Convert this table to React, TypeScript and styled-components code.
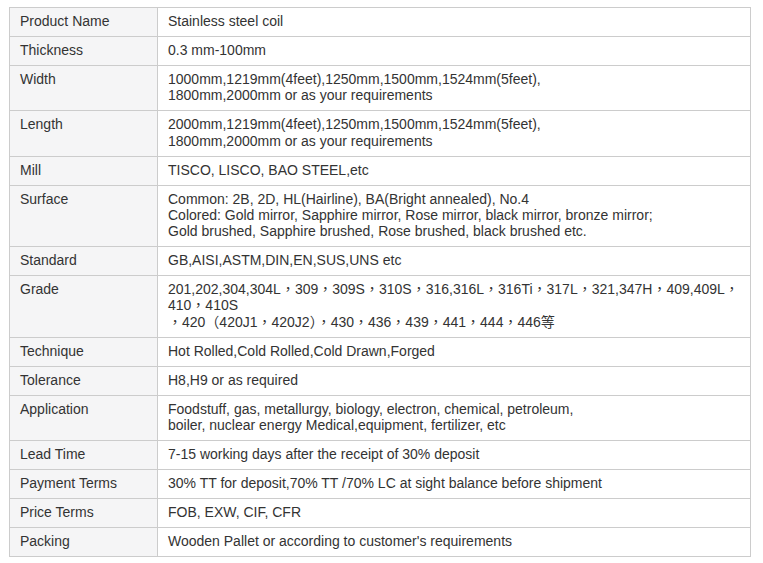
import React from "react";
import styled, { createGlobalStyle } from "styled-components";

const GlobalStyle = createGlobalStyle`
  html, body {
    margin: 0;
    padding: 0;
    background: #ffffff;
  }
  body {
    font-family: "Liberation Sans", Arial, "Noto Sans CJK TC", sans-serif;
    font-size: 14px;
    color: #333333;
  }
`;

const Page = styled.div`
  padding: 7px 0 0 9px;
`;

const SpecTable = styled.table`
  width: 742px;
  table-layout: fixed;
  border-collapse: collapse;
  border: 1px solid #cccccc;
`;

const LabelCol = styled.col`
  width: 148px;
`;

const Row = styled.tr`
  border-bottom: 1px solid #cccccc;
`;

const Cell = styled.td<{ $label?: boolean }>`
  padding: 5px 10px 6.7px 10px;
  vertical-align: top;
  line-height: 16.3px;
  text-align: left;
  border-right: 1px solid #cccccc;
  background: ${(p) => (p.$label ? "#f5f5f6" : "#ffffff")};
  font-family: "Liberation Sans", Arial, "Noto Sans CJK TC", sans-serif;
  color: #333333;
  white-space: nowrap;
`;

const Line = styled.div`
  display: block;
  &:lang(zh-TW) {
    font-family: "Liberation Sans", Arial, "Noto Sans CJK TC", sans-serif;
  }
`;

const rows: { label: string; lines: string[]; lang?: string }[] = [
  { label: "Product Name", lines: ["Stainless steel coil"] },
  { label: "Thickness", lines: ["0.3 mm-100mm"] },
  {
    label: "Width",
    lines: [
      "1000mm,1219mm(4feet),1250mm,1500mm,1524mm(5feet),",
      "1800mm,2000mm or as your requirements",
    ],
  },
  {
    label: "Length",
    lines: [
      "2000mm,1219mm(4feet),1250mm,1500mm,1524mm(5feet),",
      "1800mm,2000mm or as your requirements",
    ],
  },
  { label: "Mill", lines: ["TISCO, LISCO, BAO STEEL,etc"] },
  {
    label: "Surface",
    lines: [
      "Common: 2B, 2D, HL(Hairline), BA(Bright annealed), No.4",
      "Colored: Gold mirror, Sapphire mirror, Rose mirror, black mirror, bronze mirror;",
      "Gold brushed, Sapphire brushed, Rose brushed, black brushed etc.",
    ],
  },
  { label: "Standard", lines: ["GB,AISI,ASTM,DIN,EN,SUS,UNS etc"] },
  {
    label: "Grade",
    lang: "zh-TW",
    lines: [
      "201,202,304,304L，309，309S，310S，316,316L，316Ti，317L，321,347H，409,409L，",
      "410，410S",
      "，420（420J1，420J2），430，436，439，441，444，446等",
    ],
  },
  { label: "Technique", lines: ["Hot Rolled,Cold Rolled,Cold Drawn,Forged"] },
  { label: "Tolerance", lines: ["H8,H9 or as required"] },
  {
    label: "Application",
    lines: [
      "Foodstuff, gas, metallurgy, biology, electron, chemical, petroleum,",
      "boiler, nuclear energy Medical,equipment, fertilizer, etc",
    ],
  },
  { label: "Lead Time", lines: ["7-15 working days after the receipt of 30% deposit"] },
  {
    label: "Payment Terms",
    lines: ["30% TT for deposit,70% TT /70% LC at sight balance before shipment"],
  },
  { label: "Price Terms", lines: ["FOB, EXW, CIF, CFR"] },
  { label: "Packing", lines: ["Wooden Pallet or according to customer's requirements"] },
];

export default function App() {
  return (
    <>
      <GlobalStyle />
      <Page>
        <SpecTable>
          <colgroup>
            <LabelCol />
            <col />
          </colgroup>
          <tbody>
            {rows.map((r) => (
              <Row key={r.label}>
                <Cell $label>{r.label}</Cell>
                <Cell>
                  {r.lines.map((l, i) => (
                    <Line key={i} lang={r.lang}>
                      {l}
                    </Line>
                  ))}
                </Cell>
              </Row>
            ))}
          </tbody>
        </SpecTable>
      </Page>
    </>
  );
}
